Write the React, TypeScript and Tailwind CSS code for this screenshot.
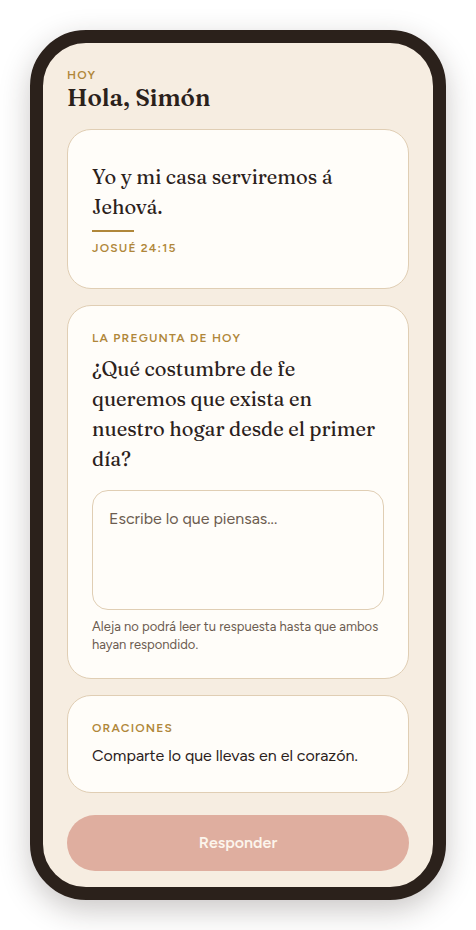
// src/App.tsx
import React, { useState } from "react";

interface EyebrowProps {
  children: React.ReactNode;
}

const Eyebrow: React.FC<EyebrowProps> = ({ children }) => (
  <p className="text-xs leading-4 font-semibold tracking-widest uppercase text-[#b0873a]">
    {children}
  </p>
);

interface CardProps {
  children: React.ReactNode;
  className?: string;
}

const Card: React.FC<CardProps> = ({ children, className = "py-6" }) => (
  <section
    className={`rounded-3xl border border-[#e0ceb4] bg-[#fffdf9] px-6 ${className}`}>
    {children}
  </section>
);

export default function App() {
  const [answer, setAnswer] = useState("");

  return (
    <div className="bg-white p-[30px] font-['Figtree','Lato',sans-serif] text-[#2b211b]">
      {/* Phone frame */}
      <div className="mx-auto max-w-md rounded-[56px] border-[13px] border-[#2b211b] bg-[#f6ede1] shadow-[0_10px_30px_rgba(43,33,27,0.25)]">
        <main className="flex flex-col gap-4 px-6 pt-6 pb-4">
          <header>
            <Eyebrow>Hoy</Eyebrow>
            <h1 className="font-['Fraunces','Liberation_Serif',serif] text-2xl leading-[30px] font-semibold">
              Hola, Simón
            </h1>
          </header>

          {/* Verse */}
          <Card className="py-8">
            <blockquote className="font-['Fraunces','Liberation_Serif',serif] text-xl leading-[30px]">
              Yo y mi casa serviremos á Jehová.
            </blockquote>
            <div className="my-2 h-0.5 w-[42px] bg-[#b0873a]" />
            <Eyebrow>Josué 24:15</Eyebrow>
          </Card>

          {/* Question */}
          <Card>
            <Eyebrow>La pregunta de hoy</Eyebrow>
            <label
              htmlFor="answer"
              className="mt-2 block font-['Fraunces','Liberation_Serif',serif] text-xl leading-[30px]">
              ¿Qué costumbre de fe queremos que exista en nuestro hogar desde el
              primer día?
            </label>
            <textarea
              id="answer"
              value={answer}
              onChange={(e) => setAnswer(e.target.value)}
              placeholder="Escribe lo que piensas..."
              aria-describedby="answer-hint"
              className="mt-4 block h-[120px] w-full resize-none rounded-2xl border border-[#e0ceb4] bg-[#fffdf9] p-4 text-base leading-6 placeholder:text-[#6c5c50] focus:outline-none focus:ring-2 focus:ring-[#b0873a]"
            />
            <p
              id="answer-hint"
              className="mt-2 text-[13px] leading-[18px] text-[#6c5c50]">
              Aleja no podrá leer tu respuesta hasta que ambos hayan respondido.
            </p>
          </Card>

          {/* Prayers */}
          <Card>
            <Eyebrow>Oraciones</Eyebrow>
            <p className="mt-2 text-base leading-6">
              Comparte lo que llevas en el corazón.
            </p>
          </Card>

          <button
            type="button"
            disabled={answer.trim() === ""}
            className="mt-1.5 h-14 w-full rounded-full bg-[#c4694f] text-base font-semibold text-[#fffdf9] disabled:bg-[#dfae9f] disabled:text-[#fcf5ec]">
            Responder
          </button>
        </main>
      </div>
    </div>
  );
}
